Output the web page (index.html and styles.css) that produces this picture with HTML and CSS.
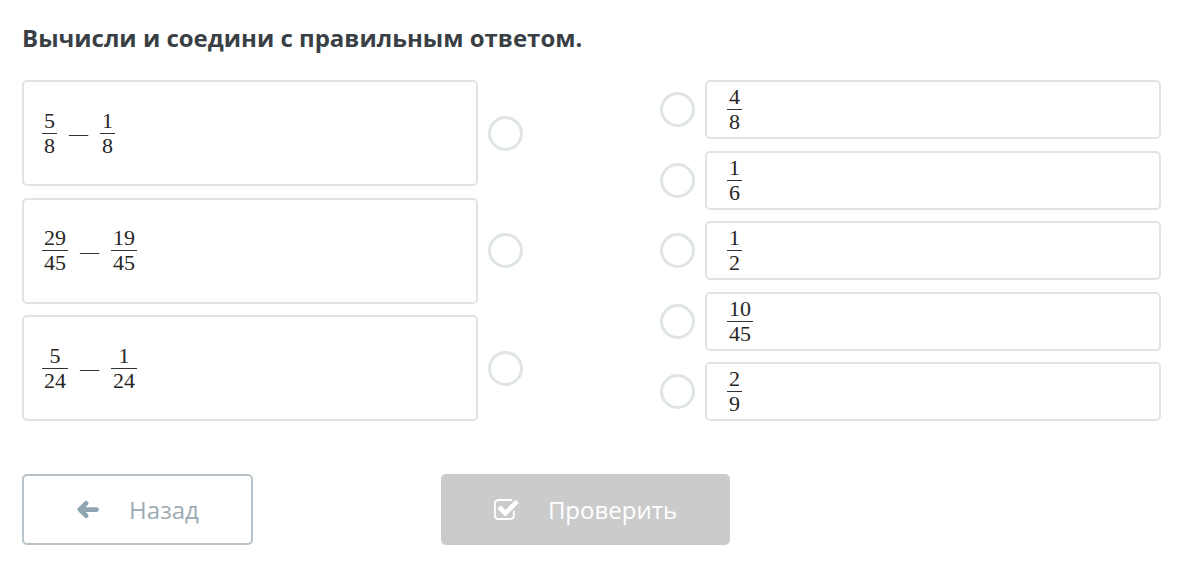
FILE: index.html
```html
<!DOCTYPE html>
<html lang="ru">
  <head>
    <meta charset="utf-8" />
    <meta name="viewport" content="width=device-width, initial-scale=1" />
    <title>Вычисли и соедини</title>
    <link rel="stylesheet" href="styles.css">
  </head>
  <body>
    <main class="quiz">
      <h1 class="quiz-title">Вычисли и соедини с правильным ответом.</h1>

      <div class="match">
        <div class="col col-left">
          <div class="row">
            <div class="card card-task">
              <span class="frac"><span class="num">5</span><span class="den">8</span></span>
              <span class="minus">—</span>
              <span class="frac"><span class="num">1</span><span class="den">8</span></span>
            </div>
            <span class="dot"></span>
          </div>
          <div class="row">
            <div class="card card-task">
              <span class="frac"><span class="num">29</span><span class="den">45</span></span>
              <span class="minus">—</span>
              <span class="frac"><span class="num">19</span><span class="den">45</span></span>
            </div>
            <span class="dot"></span>
          </div>
          <div class="row">
            <div class="card card-task">
              <span class="frac"><span class="num">5</span><span class="den">24</span></span>
              <span class="minus">—</span>
              <span class="frac"><span class="num">1</span><span class="den">24</span></span>
            </div>
            <span class="dot"></span>
          </div>
        </div>

        <div class="col col-right">
          <div class="row">
            <span class="dot"></span>
            <div class="card card-answer">
              <span class="frac"><span class="num">4</span><span class="den">8</span></span>
            </div>
          </div>
          <div class="row">
            <span class="dot"></span>
            <div class="card card-answer">
              <span class="frac"><span class="num">1</span><span class="den">6</span></span>
            </div>
          </div>
          <div class="row">
            <span class="dot"></span>
            <div class="card card-answer">
              <span class="frac"><span class="num">1</span><span class="den">2</span></span>
            </div>
          </div>
          <div class="row">
            <span class="dot"></span>
            <div class="card card-answer">
              <span class="frac"><span class="num">10</span><span class="den">45</span></span>
            </div>
          </div>
          <div class="row">
            <span class="dot"></span>
            <div class="card card-answer">
              <span class="frac"><span class="num">2</span><span class="den">9</span></span>
            </div>
          </div>
        </div>
      </div>

      <div class="actions">
        <button class="btn btn-back">
          <svg class="icon icon-arrow" viewBox="0 0 24 20"><path d="M21.5 10H4M10.5 3.5L4 10l6.5 6.5"/></svg>
          Назад
        </button>
        <button class="btn btn-check" disabled>
          <svg class="icon icon-check" viewBox="64 128 1696 1408"><path d="M1472 930v318q0 119-84.5 203.5t-203.5 84.5h-832q-119 0-203.5-84.5t-84.5-203.5v-832q0-119 84.5-203.5t203.5-84.5h832q63 0 117 25 15 7 18 23 3 17-9 29l-49 49q-10 10-23 10-3 0-9-2-23-6-45-6h-832q-66 0-113 47t-47 113v832q0 66 47 113t113 47h832q66 0 113-47t47-113v-254q0-13 9-22l64-64q10-10 23-10 6 0 12 3 20 8 20 29zm231-489l-814 814q-24 24-57 24t-57-24l-430-430q-24-24-24-57t24-57l110-110q24-24 57-24t57 24l263 263 647-647q24-24 57-24t57 24l110 110q24 24 24 57t-24 57z"/></svg>
          Проверить
        </button>
      </div>
    </main>
  </body>
</html>
```

FILE: styles.css
```css
body {
    margin: 0;
    background: #fff;
    font-family: "Open Sans", "Liberation Sans", sans-serif;
}
.quiz {
    padding: 0 22px;
}
.quiz-title {
    margin: 0 0 27px;
    padding-top: 23px;
    font-size: 24px;
    line-height: 30px;
    font-weight: 700;
    color: #3a3f45;
}

.match {
    display: flex;
    gap: 137px;
}
.col {
    display: flex;
    flex-direction: column;
    gap: 11.5px;
}
.row {
    display: flex;
    align-items: center;
    gap: 10px;
}
.card {
    box-sizing: border-box;
    width: 456px;
    border: 2px solid #e3e3e3;
    border-radius: 5px;
    display: flex;
    align-items: center;
}
.card-task {
    height: 106px;
    padding-left: 18px;
}
.card-answer {
    height: 59px;
    padding-left: 20px;
}
.dot {
    box-sizing: border-box;
    width: 35px;
    height: 35px;
    border: 3px solid #dfe4e4;
    border-radius: 50%;
}

.frac {
    display: inline-flex;
    flex-direction: column;
    font-family: "Liberation Serif", serif;
    font-size: 22px;
    line-height: 22px;
    color: #262626;
    text-align: center;
}
.num {
    padding: 0 2px 1px;
    border-bottom: 1px solid #333;
}
.den {
    padding: 1px 2px 0;
}
.minus {
    font-family: "Liberation Serif", serif;
    font-size: 19px;
    color: #333;
    margin: 2px 12px 0;
}

.actions {
    display: flex;
    gap: 188px;
    margin-top: 53px;
}
.btn {
    box-sizing: border-box;
    height: 71px;
    border-radius: 5px;
    font-family: "Open Sans", sans-serif;
    font-size: 24px;
    display: flex;
    align-items: center;
    justify-content: center;
    gap: 30px;
    padding: 0;
}
.btn-back {
    width: 231px;
    border: 2px solid #b8c3c9;
    background: #fff;
    color: #9dabb5;
}
.btn-check {
    width: 289px;
    border: none;
    background: #cbcbcb;
    color: #fff;
    gap: 29px;
}
.icon {
    fill: currentColor;
}
.icon-arrow {
    width: 23px;
    height: 19px;
    fill: none;
    stroke: #8fa5b3;
    stroke-width: 5;
    stroke-linecap: round;
    stroke-linejoin: round;
}
.icon-check {
    width: 25px;
    height: 21px;
}
```
